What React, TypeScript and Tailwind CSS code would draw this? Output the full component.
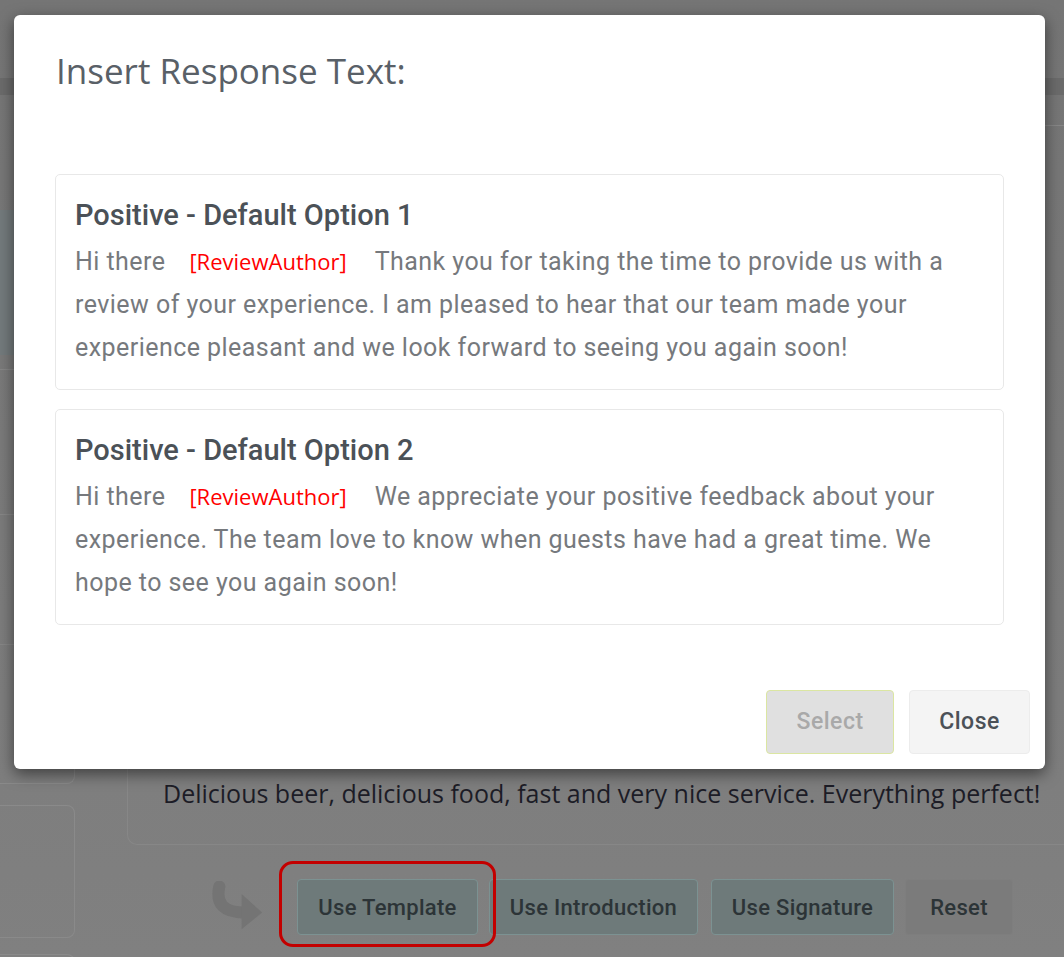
import React from "react";

const templates = [
  {
    title: "Positive - Default Option 1",
    before: "Hi there",
    after:
      "Thank you for taking the time to provide us with a review of your experience. I am pleased to hear that our team made your experience pleasant and we look forward to seeing you again soon!",
  },
  {
    title: "Positive - Default Option 2",
    before: "Hi there",
    after:
      "We appreciate your positive feedback about your experience. The team love to know when guests have had a great time. We hope to see you again soon!",
  },
];

function ReplyArrow() {
  return (
    <svg width="54" height="52" viewBox="0 0 58 52" className="shrink-0">
      <path d="M10 4 C 6 22, 14 32, 38 32" fill="none" stroke="#747474" strokeWidth="13" strokeLinecap="round" />
      <path d="M34 12 L56 32 L34 50 Z" fill="#747474" />
    </svg>
  );
}

export default function App() {
  return (
    <div className="relative w-[1064px] h-[957px] overflow-hidden bg-gradient-to-b from-[#757575] to-[#808080] font-['Roboto',sans-serif]">
      {/* page behind the overlay */}
      <div className="h-[78px]" />
      <div className="h-[17px] bg-[#6b6b6b]" />
      <div className="flex">
        {/* sidebar */}
        <div className="w-[75px] shrink-0 flex flex-col">
          <div className="h-[115px]" />
          <div className="h-[145px] bg-[#737a7c]" />
          <div className="h-[15px] border-b border-[#868686]" />
          <div className="h-[145px] border-b border-[#868686]" />
          <div className="h-[130px] border-b border-[#868686]" />
          <div className="mt-[18px] h-[121px] rounded-br-[8px] border-r border-b border-[#8a8a8a]" />
          <div className="mt-[21px] h-[133px] rounded-r-[8px] border-y border-r border-[#8a8a8a]" />
          <div className="mt-[16px] h-[40px] rounded-tr-[8px] border-t border-r border-[#8a8a8a]" />
        </div>

        {/* main */}
        <div className="flex-1 flex flex-col ml-[52px]">
          <div className="mt-[30px] h-[720px] rounded-l-[10px] border border-r-0 border-[#878787] flex flex-col justify-end pl-[35px] pb-[36px]">
            <p className="font-['Open_Sans',sans-serif] text-[25px] leading-[30px] text-[#1c1c26] whitespace-nowrap">
              Delicious beer, delicious food, fast and very nice service. Everything perfect!
            </p>
          </div>
          <div className="flex items-center mt-[34px] ml-[83px] gap-[11px]">
            <ReplyArrow />
            <div className="relative ml-[22px]">
              <div className="absolute -left-[18px] -top-[18px] -right-[18px] -bottom-[12px] rounded-[14px] border-[3px] border-[#c30000]" />
              <button className="h-[56px] w-[181px] rounded-[4px] border border-[#7c9292] bg-[#6e7a7a] text-[22px] font-medium tracking-[0.3px] text-[#2c3437]">
                Use Template
              </button>
            </div>
            <button className="h-[56px] w-[209px] rounded-[4px] border border-[#7c9292] bg-[#6e7a7a] text-[22px] font-medium tracking-[0.3px] text-[#2c3437]">
              Use Introduction
            </button>
            <button className="ml-[2px] h-[56px] w-[183px] rounded-[4px] border border-[#7c9292] bg-[#6e7a7a] text-[22px] font-medium tracking-[0.3px] text-[#2c3437]">
              Use Signature
            </button>
            <button className="h-[56px] w-[108px] rounded-[4px] border border-[#7e7e7e] bg-[#7b7b7b] text-[22px] font-medium tracking-[0.3px] text-[#2c3437]">
              Reset
            </button>
          </div>
        </div>
      </div>

      {/* modal */}
      <div className="absolute left-[14px] top-[15px] w-[1031px] h-[754px] rounded-[6px] bg-white shadow-[0_5px_15px_rgba(0,0,0,0.5)] flex flex-col">
        <h2 className="mt-[34px] ml-[42px] font-['Open_Sans',sans-serif] text-[35px] leading-[44px] text-[#596067]">
          Insert Response Text:
        </h2>
        <div className="mt-[81px] mx-[41px] flex flex-col gap-[19px]">
          {templates.map((t) => (
            <div key={t.title} className="rounded-[5px] border border-[#e8e8e8] px-[19px] pt-[20px] pb-[20px]">
              <h3 className="text-[29px] leading-[40px] font-medium text-[#4b5157]">{t.title}</h3>
              <p className="mt-[5px] text-[25px] leading-[43px] tracking-[0.45px] text-[#76797d]">
                {t.before}
                <span className="inline-block ml-[24px] mr-[28px] font-['Open_Sans',sans-serif] text-[22px] tracking-normal text-[#ff0000]">
                  [ReviewAuthor]
                </span>
                {t.after}
              </p>
            </div>
          ))}
        </div>
        <div className="mt-auto mb-[15px] mr-[15px] flex justify-end gap-[15px]">
          <button className="h-[64px] w-[128px] rounded-[4px] border border-[#dbe6a2] bg-[#e0e0e0] text-[23px] font-medium tracking-[0.5px] text-[#a9a9a9]">
            Select
          </button>
          <button className="h-[64px] w-[121px] rounded-[4px] border border-[#ececec] bg-[#f4f4f4] text-[23px] font-medium tracking-[0.5px] text-[#4b5157]">
            Close
          </button>
        </div>
      </div>
    </div>
  );
}
